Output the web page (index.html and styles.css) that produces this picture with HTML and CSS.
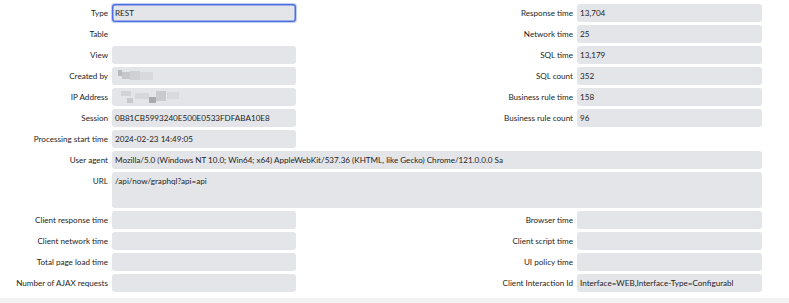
FILE: index.html
```html
<!DOCTYPE HTML>
<html>
    <head>
        <meta charset="UTF-8">
        <title>Transaction</title>
        <link rel="stylesheet" href="styles.css">
    </head>
    <body>
        <div class="form">
            <label class="lbl">Type</label>
            <div class="fld focus">REST</div>
            <label class="lbl">Response time</label>
            <div class="fld">13,704</div>

            <label class="lbl">Table</label>
            <div class="blank"></div>
            <label class="lbl">Network time</label>
            <div class="fld">25</div>

            <label class="lbl">View</label>
            <div class="fld"></div>
            <label class="lbl">SQL time</label>
            <div class="fld">13,179</div>

            <label class="lbl">Created by</label>
            <div class="fld"><span class="blur b1"></span></div>
            <label class="lbl">SQL count</label>
            <div class="fld">352</div>

            <label class="lbl">IP Address</label>
            <div class="fld"><span class="blur b2"></span></div>
            <label class="lbl">Business rule time</label>
            <div class="fld">158</div>

            <label class="lbl">Session</label>
            <div class="fld">0B81CB5993240E500E0533FDFABA10E8</div>
            <label class="lbl">Business rule count</label>
            <div class="fld">96</div>

            <label class="lbl">Processing start time</label>
            <div class="fld">2024-02-23 14:49:05</div>
            <div class="blank"></div>
            <div class="blank"></div>

            <label class="lbl">User agent</label>
            <div class="fld wide">Mozilla/5.0 (Windows NT 10.0; Win64; x64) AppleWebKit/537.36 (KHTML, like Gecko) Chrome/121.0.0.0 Sa</div>

            <label class="lbl">URL</label>
            <div class="fld wide tall">/api/now/graphql?api=api</div>

            <label class="lbl">Client response time</label>
            <div class="fld"></div>
            <label class="lbl">Browser time</label>
            <div class="fld"></div>

            <label class="lbl">Client network time</label>
            <div class="fld"></div>
            <label class="lbl">Client script time</label>
            <div class="fld"></div>

            <label class="lbl">Total page load time</label>
            <div class="fld"></div>
            <label class="lbl">UI policy time</label>
            <div class="fld"></div>

            <label class="lbl">Number of AJAX requests</label>
            <div class="fld"></div>
            <label class="lbl">Client Interaction Id</label>
            <div class="fld">Interface=WEB,Interface-Type=Configurabl</div>
        </div>
        <div class="foot"></div>
    </body>
</html>
```

FILE: styles.css
```css
body{
    margin:0;
    font-family: Lato, "Open Sans", sans-serif;
    font-size: 8.1px;
    color:#1e1e1e;
    background:#fff;
}
.form{
    display:grid;
    grid-template-columns: 108px 184px 273px 185px;
    align-items:start;
    column-gap:4px;
    row-gap:3px;
    padding-top:4px;
    width:762px;
}
.lbl{
    text-align:right;
    line-height:18px;
    white-space:nowrap;
}
.blank{
    height:18px;
}
.fld{
    height:18px;
    background:#e4e5e9;
    border-radius:3px;
    line-height:18px;
    padding-left:3px;
    white-space:nowrap;
    overflow:hidden;
}
.fld.focus{
    box-shadow: inset 0 0 0 1.5px #4d6fe3, 0 0 0 1px #c3cef6;
}
.fld.wide{
    grid-column: span 3;
}
.fld.tall{
    height:36px;
}
.blur{
    display:inline-block;
    vertical-align:top;
    margin-top:3px;
    height:12px;
}
.blur.b1{
    width:40px;
    background:
        linear-gradient(#b9babd,#b9babd) 3px 0/4px 6px no-repeat,
        linear-gradient(#c6c7ca,#c6c7ca) 7px 2px/8px 7px no-repeat,
        linear-gradient(#d0d1d4,#d0d1d4) 15px 1px/10px 9px no-repeat,
        linear-gradient(#d8d9dc,#d8d9dc) 25px 2px/13px 8px no-repeat;
}
.blur.b2{
    width:66px;
    background:
        linear-gradient(#d2d3d6,#d2d3d6) 6px 0/10px 5px no-repeat,
        linear-gradient(#c8c9cc,#c8c9cc) 12px 7px/6px 5px no-repeat,
        linear-gradient(#d6d7da,#d6d7da) 20px 2px/14px 6px no-repeat,
        linear-gradient(#a9aaad,#a9aaad) 34px 6px/7px 6px no-repeat,
        linear-gradient(#c9cacd,#c9cacd) 41px 0/10px 10px no-repeat,
        linear-gradient(#d9dadd,#d9dadd) 52px 1px/12px 7px no-repeat;
}
.foot{
    margin-top:6px;
    height:10px;
    background:#f3f3f4;
}
```
